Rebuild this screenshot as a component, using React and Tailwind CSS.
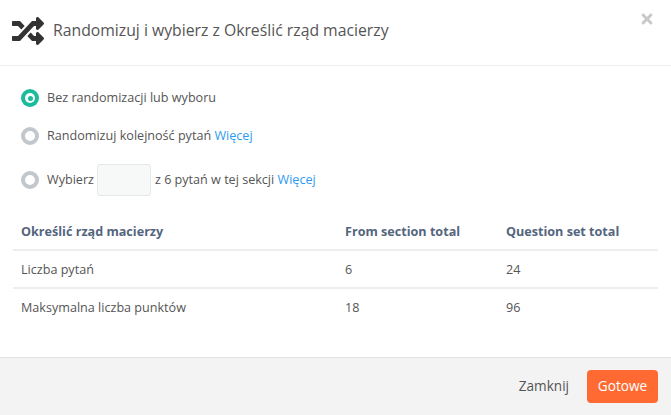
import React from "react";
import { FaRandom, FaTimes } from "react-icons/fa";

function Radio({ on }) {
  return on ? (
    <span className="w-[18px] h-[18px] rounded-full bg-[#1abc9c] flex items-center justify-center shrink-0">
      <span className="w-[10px] h-[10px] rounded-full bg-white flex items-center justify-center">
        <span className="w-[5px] h-[5px] rounded-full bg-[#1abc9c]" />
      </span>
    </span>
  ) : (
    <span className="w-[18px] h-[18px] rounded-full border-[4px] border-[#c2c7cc] bg-white shrink-0" />
  );
}

const More = () => <a className="text-[#2d9cf0]">Więcej</a>;

export default function App() {
  return (
    <div className="w-[671px] h-[415px] bg-white flex flex-col overflow-hidden text-[#555] text-[12.6px] font-['Open_Sans',sans-serif]">
      <header className="h-[66px] shrink-0 border-b border-[#eeeeee] flex items-center pl-3 pb-[4px] relative">
        <FaRandom className="w-[32px] h-[32px] text-[#333]" />
        <h1 className="ml-[9px] text-[15.75px] text-[#555] font-normal">Randomizuj i wybierz z Określić rząd macierzy</h1>
        <FaTimes className="absolute right-[17px] top-[11px] w-[14px] h-[16px] text-[#c8c8c8]" />
      </header>
      <main className="flex-1 flex flex-col px-[13px]">
        <div className="flex flex-col pl-2 pt-[22px]">
          <label className="h-[20px] flex items-center gap-2"><Radio on /><span>Bez randomizacji lub wyboru</span></label>
          <label className="h-[20px] mt-[18px] flex items-center gap-2"><Radio /><span>Randomizuj kolejność pytań <More /></span></label>
          <label className="h-[32px] mt-[18px] flex items-center gap-2">
            <Radio />
            <span>Wybierz</span>
            <input className="w-[54px] h-[32px] -ml-[5px] mr-[-4px] rounded-[3px] border border-[#e6e9ea] bg-[#f7f9f9]" />
            <span>z 6 pytań w tej sekcji <More /></span>
          </label>
        </div>
        <table className="w-[645px] mt-[16px] border-collapse text-left">
          <thead>
            <tr className="h-[38px] border-b-2 border-[#eeeeee] text-[#54657e] font-bold">
              <th className="pl-2 pt-[4px] w-[332px] font-bold">Określić rząd macierzy</th>
              <th className="pt-[4px] w-[161px] font-bold">From section total</th>
              <th className="pt-[4px] font-bold">Question set total</th>
            </tr>
          </thead>
          <tbody>
            <tr className="h-[38px] border-b-2 border-[#eeeeee]">
              <td className="pl-2 pt-[2px]">Liczba pytań</td><td className="pt-[2px]">6</td><td className="pt-[2px]">24</td>
            </tr>
            <tr className="h-[38px]">
              <td className="pl-2 pt-[2px]">Maksymalna liczba punktów</td><td className="pt-[2px]">18</td><td className="pt-[2px]">96</td>
            </tr>
          </tbody>
        </table>
      </main>
      <footer className="h-[58px] shrink-0 bg-[#f3f3f3] border-t border-[#e2e2e2] flex items-center justify-end pr-[13px]">
        <button className="text-[13.6px] text-[#555] mr-[18px]">Zamknij</button>
        <button className="w-[71px] h-[33px] rounded-[4px] bg-[#ff6a33] text-white text-[13.6px]">Gotowe</button>
      </footer>
    </div>
  );
}
